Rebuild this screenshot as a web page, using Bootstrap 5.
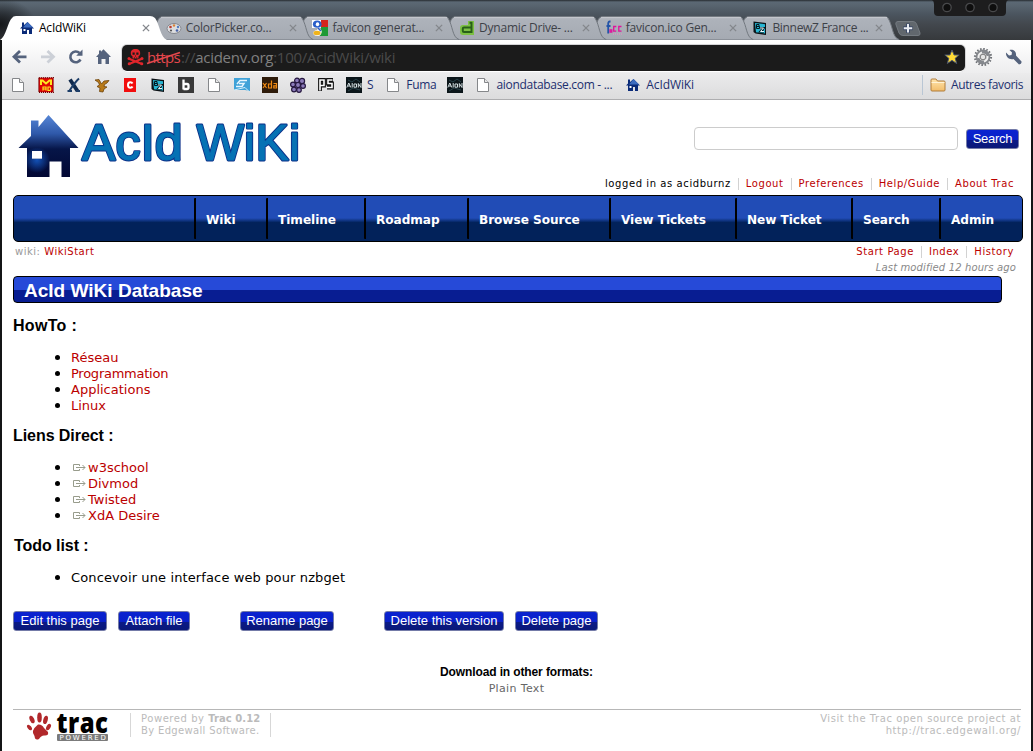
<!DOCTYPE html>
<html lang="fr">
<head>
<meta charset="utf-8">
<title>AcIdWiKi</title>
<link rel="stylesheet" href="https://cdn.jsdelivr.net/npm/bootstrap@5.3.0/dist/css/bootstrap.min.css">
<script src="https://cdn.jsdelivr.net/npm/bootstrap@5.3.0/dist/js/bootstrap.bundle.min.js"></script>
<style>
body{width:1033px;height:751px;overflow:hidden;background:#141516;font-family:"DejaVu Sans",sans-serif;font-size:13px;line-height:16px;color:#000}
a{text-decoration:none;color:#b00}
svg{display:block;flex:none}
.ui-font{font-family:"Open Sans",sans-serif;font-size:12px;letter-spacing:-.22px}
/* window frame */
.frame-top{height:40px;background:linear-gradient(#262b30 0,#5b6874 2px,#596570 5px,#4b555f 14px,#43484e 24px,#36393c 40px);padding:16px 0 0 4px}
.frame-top::before{content:"";position:absolute;left:0;top:0;width:34px;height:40px;background:radial-gradient(ellipse at 0 60%,#15171a 0,transparent 75%)}
.tab-item{width:146.7px;height:24px;padding-left:15px;color:#3d4148}
.tab-item .tab-shape{position:absolute;left:-4px;top:0;z-index:-1}
.tab-item .tab-label{width:107px;padding-left:4px;line-height:24px}
.tab-item.current{color:#000}
.new-tab{margin:5px 0 0 11px}
.cam{left:932px;top:0}
.chrome-body{margin:0 2px 0 2px;background:#fff;height:711px}
.toolbar-row{height:33px;background:linear-gradient(#fff,#ededee);padding-left:9px}
.omnibox{width:843px;height:26px;background:#1b1b1b;border-radius:5px;box-shadow:0 1px 0 #fff,0 0 0 1px #d4d4d6;margin-left:9px;padding:0 5px 2px;font-family:"Open Sans",sans-serif;font-size:15px;letter-spacing:-.26px;color:#4a4a4a;line-height:24px}
.omnibox .host{color:#808080}
.omnibox .scheme{color:#e4474c;letter-spacing:-.66px;width:34px;margin-left:3px}
.scheme svg{position:absolute;left:-1px;top:4px}
.bm-row{height:27px;background:linear-gradient(#ebebec,#dcdcdd);border-bottom:1px solid #aeaeb0;padding:0 8px 2px 8px;gap:12px;color:#1c2f6e;line-height:16px}
.bm-row .bm-text{margin-left:-7px;white-space:nowrap;letter-spacing:-.3px}
.bm-sep{width:1px;height:20px;background:#b9c6d4}
/* wiki page */
.wiki{padding:0 8px 0 11px}
.masthead{height:95px}
.search-box{width:264px;height:23px;border:1px solid #ccc;border-radius:4px;padding:0 6px}
.btn-wiki{font-family:"Liberation Sans",sans-serif;font-size:13px;line-height:18px;height:20px;padding:0;color:#fff;border:1px solid #747ba8;border-radius:3px;background:linear-gradient(#0a22d0 0,#0920c8 54%,#0b1a88 55%,#0a1878);white-space:nowrap}
.mini{font-size:10px;letter-spacing:.58px;line-height:12px}
.mini>*+*{border-left:1px solid #d2d2d2;padding-left:7px;margin-left:7px}
.mainnav{height:47px;border:1px solid #000;border-radius:5px;background:linear-gradient(#214cb6 0,#214cb6 49%,#02225a 59%,#02225a);font-weight:700;font-size:12.1px;width:1010px;padding-right:1px}
.mainnav a{color:#fff;border-left:2px solid #000;height:41px;line-height:41px;padding:2px 0 0 10px;margin-top:2px;border-radius:1px;white-space:nowrap;letter-spacing:-.04px}
.page-title{height:27px;width:989px;border:1px solid #000;border-radius:4px;background:linear-gradient(#264ad8 0,#264ad8 13px,#081d92 13px);font:700 19.05px/27px "Liberation Sans",sans-serif;color:#fff;padding-left:10px}
.sec{font:700 16px/20px "Liberation Sans",sans-serif;margin:0;letter-spacing:-.06px}
.links{margin:14px 0 12px;padding-left:58px}
.links li{list-style:none;position:relative;height:16px;white-space:nowrap}
.links li::before{content:"";position:absolute;left:-16px;top:5px;width:5px;height:5px;border-radius:50%;background:#000}
.ext a::before{content:"";display:inline-block;width:17px;height:9px;background:url("data:image/svg+xml,%3Csvg xmlns='http://www.w3.org/2000/svg' width='17' height='9'%3E%3Cpath d='M8.500 3V1.500H2.500V7.500H8.500V6M5 4.500H14M11.500 2L14 4.500L11.500 7' fill='none' stroke='%23989c8c'/%3E%3C/svg%3E") no-repeat}
.foot{border-top:1px solid #b7b7b7;width:1008px;font-size:10px;line-height:12px;letter-spacing:.56px;color:#bbb}
.vr-line{width:1px;height:24px;background:#d7d7d7;margin-top:3px}
</style>
</head>
<body class="position-relative">

<svg width="0" height="0" class="position-absolute">
<defs>
<linearGradient id="gTab" x1="0" y1="0" x2="0" y2="1"><stop offset="0" stop-color="#b7bbc3"/><stop offset=".15" stop-color="#adb2ba"/><stop offset="1" stop-color="#a5aab2"/></linearGradient>
<linearGradient id="gHouse" x1="0" y1="0" x2="0" y2="1"><stop offset="0" stop-color="#5686d6"/><stop offset=".3" stop-color="#2f59aa"/><stop offset=".55" stop-color="#061548"/><stop offset="1" stop-color="#020733"/></linearGradient>
<radialGradient id="gGlow"><stop offset="0" stop-color="#1559c4" stop-opacity=".9"/><stop offset="1" stop-color="#1559c4" stop-opacity="0"/></radialGradient>
<linearGradient id="gFolder" x1="0" y1="0" x2="0" y2="1"><stop offset="0" stop-color="#ffe5ad"/><stop offset="1" stop-color="#f2bd6b"/></linearGradient>
<symbol id="tabOff" viewBox="0 0 170 24"><path d="M2 24C8 22 8 5 13 1.500Q14 .5 17 .5H151Q154 .5 155 2C160 10 159 21 166 23.500V24Z" fill="url(#gTab)" stroke="#737980"/><path d="M14 1.500H154" stroke="#c3c6cc"/></symbol>
<symbol id="tabOn" viewBox="0 0 170 24"><path d="M0 24C6 21 8 5 12 2Q13 0 16 0H150Q153 0 155 2C160 9 160 21 167 24Z" fill="#fff"/></symbol>
<symbol id="xMark" viewBox="0 0 9 9"><path d="M1 1L8 8M8 1L1 8" stroke="#84878c" stroke-width="1.500"/></symbol>
<symbol id="doc" viewBox="0 0 16 16"><path d="M2.500 1.500H9.500L13.500 5.500V14.500H2.500Z" fill="#fff" stroke="#85878a"/><path d="M9.500 1.500V5.500H13.500" fill="#e8e8e8" stroke="#85878a"/></symbol>
<symbol id="house" viewBox="0 0 16 16"><path d="M3 2.500H5V5L8.500 2 15 8.500H13V14H10V10H8V14H3V8.500H1L3 6.500Z" fill="#0b2b78"/><path d="M8.500 2L14 7.500H4Z" fill="#3c6cc0"/><path d="M4.500 9H6.500V11H4.500Z" fill="#fff"/></symbol>
<symbol id="bz" viewBox="0 0 16 16"><path d="M1.500 1.500L14 3V15L3.500 13.500 1.500 12Z" fill="#0b1216"/><path d="M3 3L13 4.200V13.500L4 12.200Z" fill="#27b5d2"/><path d="M4.500 4.500V8.500H7.500V6.500H4.500H7V4.500Z" fill="none" stroke="#021820"/><path d="M8 8H11.500L8.500 11.500H12" fill="none" stroke="#021820" stroke-width="2.200"/><path d="M8 8H11.500L8.500 11.500H12" fill="none" stroke="#e9fbff"/></symbol>
<symbol id="aion" viewBox="0 0 16 16"><path d="M0 0H16V16H0Z" fill="#0b1519"/><path d="M2 3L6 5 10 2 14 5M2 14L7 11 14 13" stroke="#28424a" fill="none"/><path d="M.8 10.500L2.800 6 4.800 10.500M2 9H4M6.200 6V10.500M8 7H10.500V10.200H8ZM12.300 10.500V6.500L15 10.500V6" stroke="#d4e0e2" fill="none"/></symbol>
</defs></svg>

<header class="frame-top d-flex ui-font position-relative">
  <div class="tab-item current d-flex align-items-center position-relative" style="z-index:9"><svg class="tab-shape" width="170" height="24"><use href="#tabOn"/></svg><svg width="16" height="16"><use href="#house"/></svg><span class="tab-label">AcIdWiKi</span><svg width="8" height="8"><use href="#xMark"/></svg></div>
  <div class="tab-item d-flex align-items-center position-relative" style="z-index:8"><svg class="tab-shape" width="170" height="24"><use href="#tabOff"/></svg>
    <svg width="16" height="16" viewBox="0 0 16 16"><ellipse cx="8" cy="8.500" rx="7" ry="5" fill="#dcdde0" stroke="#85878e"/><circle cx="4.500" cy="7" r="1.300" fill="#bb3c2e"/><circle cx="8" cy="5.500" r="1.200" fill="#d88237"/><circle cx="12" cy="7" r="1.200" fill="#4f7cc4"/><circle cx="11" cy="10.500" r="1.300" fill="#4662a8"/><circle cx="5" cy="10.500" r="1.100" fill="#555"/></svg>
    <span class="tab-label">ColorPicker.co...</span><svg width="8" height="8"><use href="#xMark"/></svg></div>
  <div class="tab-item d-flex align-items-center position-relative" style="z-index:7"><svg class="tab-shape" width="170" height="24"><use href="#tabOff"/></svg>
    <svg width="16" height="16" viewBox="0 0 16 16"><path d="M0 0H9V8H0Z" fill="#fff"/><path d="M9 0H16V7H9Z" fill="#d6241c"/><path d="M9 7H16V16H8Z" fill="#1f9a36"/><ellipse cx="5.200" cy="4.200" rx="4.300" ry="3.600" fill="#2b5fc9"/><ellipse cx="5.500" cy="4.200" rx="1.700" ry="2" fill="#fff"/><path d="M6 8C12 9 10 16 5.500 16S-1 11 5 10Z" fill="#fff"/><ellipse cx="5" cy="13" rx="3.600" ry="2.200" fill="#f0b31c"/><path d="M6 8L9 11" stroke="#2b5fc9" stroke-width="1.500"/></svg>
    <span class="tab-label">favicon generat...</span><svg width="8" height="8"><use href="#xMark"/></svg></div>
  <div class="tab-item d-flex align-items-center position-relative" style="z-index:6"><svg class="tab-shape" width="170" height="24"><use href="#tabOff"/></svg>
    <svg width="16" height="16" viewBox="0 0 16 16"><path d="M9 1H15V15H4Q1 15 1 12V8Q1 5 4 5H9Z" fill="#7cc043"/><path d="M10.500 2.800H12.500V12H5Q3.800 12 3.800 10.800V8.500Q3.800 7.500 5 7.500H12" fill="none" stroke="#285f18" stroke-width="2"/></svg>
    <span class="tab-label">Dynamic Drive- ...</span><svg width="8" height="8"><use href="#xMark"/></svg></div>
  <div class="tab-item d-flex align-items-center position-relative" style="z-index:5"><svg class="tab-shape" width="170" height="24"><use href="#tabOff"/></svg>
    <svg width="16" height="16" viewBox="0 0 16 16"><path d="M4.500 1.500H3.800Q2.200 1.500 2.200 3.500V13.500M.5 6H4.500" stroke="#2354a8" stroke-width="1.800" fill="none"/><path d="M4 10H5.800V12H4ZM10.300 6.500H7.700V11.200H10.300M15.500 6.500H12.800V11.200H15.500" stroke="#e0129c" stroke-width="1.300" fill="none"/><path d="M7 14H16" stroke="#e98fca" stroke-dasharray="1 1"/></svg>
    <span class="tab-label">favicon.ico Gen...</span><svg width="8" height="8"><use href="#xMark"/></svg></div>
  <div class="tab-item d-flex align-items-center position-relative" style="z-index:4;letter-spacing:-.32px"><svg class="tab-shape" width="170" height="24"><use href="#tabOff"/></svg><svg width="16" height="16"><use href="#bz"/></svg><span class="tab-label">BinnewZ France ...</span><svg width="8" height="8"><use href="#xMark"/></svg></div>
  <svg class="new-tab" width="26" height="15" viewBox="0 0 26 15"><path d="M3 .5H18Q20.500 .5 21.500 3L25 12Q25.500 14.500 23 14.500H8Q5 14.500 4 12L.8 3Q.5 .5 3 .5Z" fill="#61676d" stroke="#747a80"/><path d="M13 2.500V12M8.300 7.200H17.700" stroke="#3c4a66" stroke-width="4"/><path d="M13 3V11.500M8.800 7.200H17.200" stroke="#e9ecf2" stroke-width="2"/></svg>
  <svg class="cam position-absolute" width="76" height="17" viewBox="0 0 76 17"><path d="M0 0H76Q74 1 74 4V12Q74 16 70 16H6Q2 16 2 12V4Q2 1 0 0Z" fill="#1d1d1e"/><g fill="#0e0e0e" stroke="#48494b" stroke-width="1.300"><circle cx="15" cy="7.500" r="4.200"/><circle cx="38" cy="7.500" r="4.200"/><circle cx="61" cy="7.500" r="4.200"/></g></svg>
</header>

<div class="chrome-body overflow-hidden">
  <div class="toolbar-row d-flex align-items-center pt-1">
    <svg width="102" height="20" viewBox="0 0 102 20" style="margin-top:-3px"><path d="M9 4L3 9.800 9 15.600M3 9.800H15.500" fill="none" stroke="#55637d" stroke-width="2.800"/><path d="M36.500 4L42.500 9.800 36.500 15.600M30 9.800H42" fill="none" stroke="#ccd0d7" stroke-width="2.800"/><path d="M69.500 12.500A5.400 5.400 0 1 1 68.500 6" fill="none" stroke="#55637d" stroke-width="2.600"/><path d="M71.500 2.500V8.800H65.200Z" fill="#55637d"/><path d="M92.500 2.200L100 10H98V17H94.500V12H90.500V17H87V10H85L88 6.800V3.500H90V4.800Z" fill="#55637d"/></svg>
    <div class="omnibox d-flex align-items-center" style="margin-top:-2px">
      <svg width="17" height="18" viewBox="0 0 17 18"><path d="M8.500 1C12 1 13.200 3 13.200 5.200 13.200 7 12.200 7.800 11.500 8.300V10.500H5.500V8.300C4.800 7.800 3.800 7 3.800 5.200 3.800 3 5 1 8.500 1Z" fill="#e0252b"/><path d="M5.500 4.500H7.700V6.700H5.500ZM9.300 4.500H11.500V6.700H9.300ZM8 7.500H9V8.500H8ZM7 9.500H8V10.500H7ZM9.200 9.500H10.200V10.500H9.200Z" fill="#1b1b1b"/><path d="M2 10.800L15 16M15 10.800L2 16" stroke="#e0252b" stroke-width="2"/><g fill="#e0252b"><circle cx="2" cy="10.500" r="1.500"/><circle cx="15" cy="10.500" r="1.500"/><circle cx="2.200" cy="15.800" r="1.500"/><circle cx="14.800" cy="15.800" r="1.500"/></g></svg>
      <span class="scheme position-relative">https<svg width="36" height="16"><path d="M1 14.500L34 3.500" stroke="#e4474c" stroke-width="1.800"/></svg></span><span>://<span class="host">acidenv.org</span>:100/AcidWiki/wiki</span>
      <svg class="ms-auto" width="16" height="16" viewBox="0 0 16 16"><path d="M8 1L10.100 6H15.200L11.200 9.300 12.700 14.500 8 11.400 3.300 14.500 4.800 9.300.8 6H5.900Z" fill="#ffdb35" stroke="#49546c"/></svg>
    </div>
    <svg style="margin:-3px 0 0 8px" width="20" height="20" viewBox="0 0 20 20"><circle cx="10" cy="10" r="8" fill="none" stroke="#6d7075" stroke-width="2.200" stroke-dasharray="1.500 1.640"/><circle cx="10" cy="10" r="5.500" fill="none" stroke="#85888d" stroke-width="3.800"/><path d="M5.500 11A4.800 4.800 0 0 1 9 5.500M14.500 9A4.800 4.800 0 0 1 11 14.500" fill="none" stroke="#f1f1f1" stroke-width="2"/><circle cx="10" cy="10" r="2.800" fill="#e5e5e5" stroke="#777"/></svg>
    <svg width="17" height="18" viewBox="0 0 17 18" style="margin:-1px 0 0 12px"><path d="M1 3.500L4 6.500 6.500 6 7 3.500 4.500 1C8 0 11.500 2 11 6.500L16.500 12.500Q17 15 14 15.500L8.500 10C4 11 .5 8 1 3.500Z" fill="#54627c"/></svg>
  </div>
  <div class="bm-row ui-font d-flex align-items-center">
    <svg width="16" height="16"><use href="#doc"/></svg>
    <svg width="16" height="16" viewBox="0 0 16 16"><path d="M.8 .8H15.200V15.200H.8Z" fill="#e00505" stroke="#6e0000" stroke-width="1.500" stroke-dasharray="1 1"/><path d="M3 8V3.500H4.500L8 6.500 11.500 3.500H13V8" stroke="#ffe520" stroke-width="2" fill="none"/><path d="M5 13.500V10H8V13.500M5 12H8M10 10V13.500H12Q13.500 12 12 10Z" stroke="#ffe520" stroke-width="1.200" fill="none"/></svg>
    <svg width="16" height="16" viewBox="0 0 16 16"><path d="M4 2.500L11.500 14" stroke="#10294c" stroke-width="3.800"/><path d="M13 1.500Q9 5 3 14.500M1.500 14H6M10 14H14" stroke="#1c3d68" stroke-width="2" fill="none"/></svg>
    <svg width="16" height="16" viewBox="0 0 16 16"><path d="M1 3L5 2.500 7.500 7 10 4 15 3.500 13 6 10.500 7.500 10 9.500 13 10 10 12 9 15 5.500 14.500 6 11 3 9.500 5.500 8 4.500 5.500Z" fill="#b87a1a" stroke="#6d430a" stroke-width=".8"/></svg>
    <svg width="16" height="16" viewBox="0 0 16 16"><path d="M2 1H14V15H2Z" fill="#f20d0d"/><path d="M10.500 6.500Q10 5.300 8.300 5.300 6 5.300 6 8T8.300 10.700Q10 10.700 10.500 9.500" stroke="#fff" stroke-width="2" fill="none"/></svg>
    <svg width="16" height="16"><use href="#bz"/></svg>
    <svg width="16" height="16" viewBox="0 0 16 16"><path d="M0 0H16V16H0Z" fill="#393939"/><path d="M5.500 2.500V12.500M5.500 7H9Q10.500 7 10.500 8.500V10.500Q10.500 12 9 12H5.500" stroke="#fff" stroke-width="2.300" fill="none"/></svg>
    <svg width="16" height="16"><use href="#doc"/></svg>
    <svg width="16" height="16" viewBox="0 0 16 16"><path d="M0 1H16V14L11 13H0Z" fill="#3fa2d8"/><path d="M3 7L6 3.500H13M5 6.500H10L8 9.500H2" stroke="#e6f6ff" stroke-width="1.500" fill="none"/><path d="M0 13L11 10.500 15 14.500" stroke="#d5effb" fill="none"/></svg>
    <svg width="16" height="16" viewBox="0 0 16 16"><path d="M0 0H16V16H0Z" fill="#2e1b0a"/><path d="M1 6L4.500 11M4.500 6L1 11M9.500 3.500V11H6.500V7H9.500M11.500 6.500H14.500V11H11.800V8.800H14.500" stroke="#f08a14" stroke-width="1.200" fill="none"/></svg>
    <svg width="16" height="16" viewBox="0 0 16 16"><g fill="#8c7cba" stroke="#261840" stroke-width="1.200"><circle cx="7" cy="3.500" r="2.400"/><circle cx="12" cy="4" r="2.600"/><circle cx="3" cy="7.500" r="2.400"/><circle cx="8" cy="8" r="2.500"/><circle cx="13" cy="9" r="2.400"/><circle cx="4" cy="12.500" r="2.400"/><circle cx="9" cy="13" r="2.300"/></g></svg>
    <svg width="16" height="16" viewBox="0 0 16 16"><path d="M2 14V3H6V8.500H2M15 3H10V6.500H14V10.500H9" stroke="#111" stroke-width="3.800" fill="none"/><path d="M2 13.500V3H6V8.500H2M14.500 3H10V6.500H14V10.500H9" stroke="#fff" stroke-width="1.600" fill="none"/></svg>
    <svg width="16" height="16"><use href="#aion"/></svg><span class="bm-text">S</span>
    <svg width="16" height="16"><use href="#doc"/></svg><span class="bm-text">Fuma</span>
    <svg width="16" height="16" style="margin-left:-1px"><use href="#aion"/></svg>
    <svg width="16" height="16"><use href="#doc"/></svg><span class="bm-text">aiondatabase.com - ...</span>
    <svg width="16" height="16" style="margin-left:1px"><use href="#house"/></svg><span class="bm-text" style="letter-spacing:-.1px">AcIdWiKi</span>
    <span class="bm-sep ms-auto"></span>
    <svg style="margin-left:-5px" width="16" height="16" viewBox="0 0 16 16"><path d="M1 3Q1 2 2 2H6L7.500 4H14Q15 4 15 5V13Q15 14 14 14H2Q1 14 1 13Z" fill="url(#gFolder)" stroke="#b07c3a"/><path d="M1.500 5.500H14.500" stroke="#fff3d6"/></svg><span class="bm-text" style="letter-spacing:-.38px">Autres favoris</span>
  </div>

  <main class="wiki">
    <div class="masthead d-flex">
      <svg width="300" height="85" viewBox="13 100 300 85"><clipPath id="cl"><path d="M27 148H70V177H61.500V161.500H49.500V177H27V148ZM32 151V158.500H42V151Z" clip-rule="evenodd"/></clipPath><path d="M18.500 148L31 136V120.500H38.500V127L48.500 115 78.500 148H70V177H61.500V161.500H49.500V177H27V148ZM32 151V158.500H42V151Z" fill="url(#gHouse)" fill-rule="evenodd"/><circle cx="37" cy="160" r="13" fill="url(#gGlow)" clip-path="url(#cl)"/>
        <path d="M32 151H42V158.500H32Z" fill="#fff"/>
        <g font-family="Liberation Sans" font-size="50" stroke-linejoin="round"><text x="82" y="159.500" textLength="218" fill="#0b2f88" stroke="#0b2f88" stroke-width="2.800">AcId WiKi</text><text x="82" y="159.500" textLength="218" fill="#0672b4" stroke="#0672b4" stroke-width="1" aria-hidden="true">AcId WiKi</text></g></svg>
      <div class="ms-auto d-flex flex-column align-items-end">
        <form class="d-flex align-items-center" style="margin:27px 4px 0 0"><input class="search-box" type="text" aria-label="Search"><button type="button" class="btn-wiki" style="width:53px;margin-left:8px;letter-spacing:-.25px">Search</button></form>
        <div class="mini d-flex" style="margin:28px 9px 0 0"><span>logged in as acidburnz</span><a href="#">Logout</a><a href="#">Preferences</a><a href="#">Help/Guide</a><a href="#">About Trac</a></div>
      </div>
    </div>
    <nav class="mainnav d-flex justify-content-end">
      <a href="#" style="width:72px">Wiki</a><a href="#" style="width:98px">Timeline</a><a href="#" style="width:103px">Roadmap</a><a href="#" style="width:142px">Browse Source</a><a href="#" style="width:126px">View Tickets</a><a href="#" style="width:116px">New Ticket</a><a href="#" style="width:88px">Search</a><a href="#" style="width:82px">Admin</a>
    </nav>
    <div class="d-flex justify-content-between" style="height:34px;padding:4px 9px 0 2px">
      <div class="mini" style="color:#999;letter-spacing:.52px">wiki: <a href="#" class="border-0 p-0 m-0">WikiStart</a></div>
      <div class="d-flex flex-column align-items-end">
        <div class="mini d-flex"><a href="#">Start Page</a><a href="#">Index</a><a href="#">History</a></div>
        <em style="font-size:10px;letter-spacing:.13px;color:#888;line-height:12px;margin:4px -2px 0 0">Last modified 12 hours ago</em>
      </div>
    </div>
    <h1 class="page-title m-0">AcId WiKi Database</h1>
    <h2 class="sec" style="margin-top:13px;letter-spacing:.3px">HowTo :</h2>
    <ul class="links"><li><a href="#">Réseau</a></li><li><a href="#" style="letter-spacing:-.25px">Programmation</a></li><li><a href="#">Applications</a></li><li><a href="#">Linux</a></li></ul>
    <h2 class="sec">Liens Direct :</h2>
    <ul class="links ext"><li><a href="#">w3school</a></li><li><a href="#">Divmod</a></li><li><a href="#">Twisted</a></li><li><a href="#">XdA Desire</a></li></ul>
    <h2 class="sec" style="padding-left:1px">Todo list :</h2>
    <ul class="links"><li style="letter-spacing:.12px">Concevoir une interface web pour nzbget</li></ul>
    <div class="d-flex" style="margin-top:25px"><button class="btn-wiki" style="width:94px">Edit this page</button><button class="btn-wiki" style="width:72px;margin-left:11px">Attach file</button><button class="btn-wiki" style="width:94px;margin-left:50px">Rename page</button><button class="btn-wiki" style="width:120px;margin-left:50px">Delete this version</button><button class="btn-wiki" style="width:83px;margin-left:11px">Delete page</button></div>
    <div class="text-center" style="margin-top:33px;width:1007px;height:45px"><div style="font:700 12px/16px 'Liberation Sans',sans-serif;letter-spacing:-.12px">Download in other formats:</div><div style="font-size:11px;letter-spacing:.35px;color:#666;line-height:18px">Plain Text</div></div>
    <footer class="foot d-flex">
      <svg class="overflow-visible" style="margin:2px 21px 0 13px" width="83" height="30" viewBox="26 712 83 30"><g fill="#b1282b"><ellipse cx="32" cy="719.500" rx="2.200" ry="4" transform="rotate(-25 32 719.500)"/><ellipse cx="39.500" cy="717.500" rx="2.300" ry="5"/><ellipse cx="45.500" cy="720" rx="2.200" ry="4.300" transform="rotate(15 46 720)"/><ellipse cx="48.500" cy="727" rx="2" ry="3.500" transform="rotate(30 48.500 727)"/><ellipse cx="29.500" cy="727.500" rx="1.800" ry="3.200" transform="rotate(-40 29.500 727.500)"/><path d="M38 724.500Q42 724 44 728L48 732Q49 736 44 735.500 41 735.500 39 739 35 741 34.500 736 30 731 38 724.500Z"/></g>
        <text x="56.500" y="733" font-family="Open Sans" font-weight="800" font-size="27.500" textLength="52" lengthAdjust="spacingAndGlyphs">trac</text><rect x="57" y="734" width="51" height="7" rx="1" fill="#7b7b7b"/><text x="59.500" y="740.200" font-family="DejaVu Sans" font-size="7" fill="#fff" textLength="47">POWERED</text></svg>
      <span class="vr-line"></span><div class="text-nowrap" style="margin:3px 10px 0 10px;width:119px">Powered by <b style="letter-spacing:.04px">Trac 0.12</b><br><span style="letter-spacing:.34px">By Edgewall Software.</span></div><span class="vr-line"></span>
      <div class="ms-auto text-end" style="margin-top:3px">Visit the Trac open source project at<br>http://trac.edgewall.org/</div>
    </footer>
  </main>
</div>
</body>
</html>
